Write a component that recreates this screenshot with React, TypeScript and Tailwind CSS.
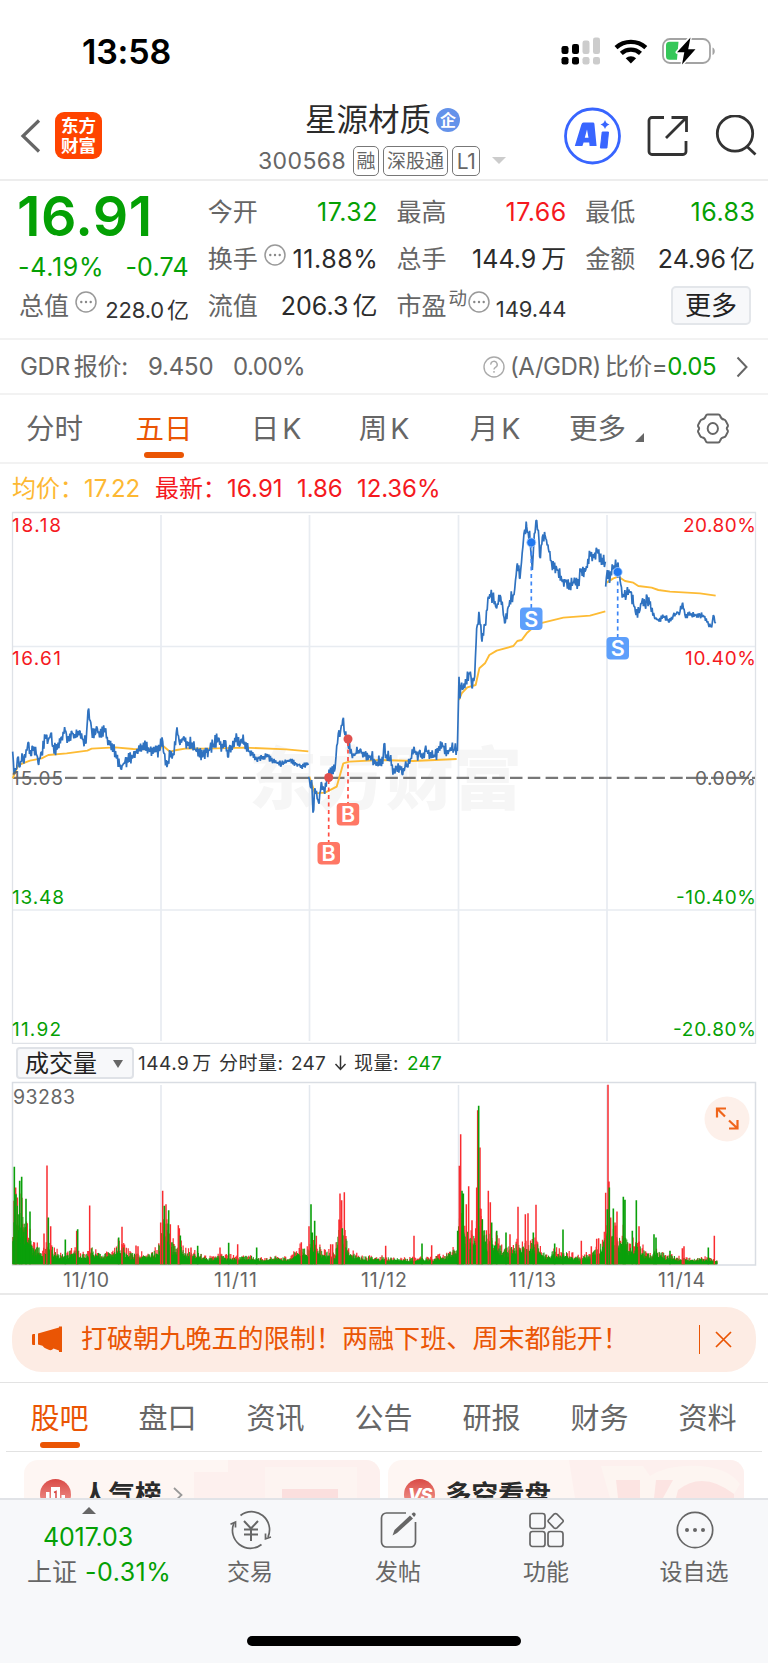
import type { ReactNode } from "react";

const FONT = "font-['Inter','Noto_Sans_CJK_SC',sans-serif]";

/* ---------- chart data ---------- */

type Pt = [number, number];

const priceA: Pt[] = [
  [38,755],[42,820],[50,805],[55,770],[60,800],[66,760],[72,790],[84,728],[92,765],[100,740],[110,765],[116,795],[125,755],[138,708],[145,720],[152,702],[158,740],[170,748],[185,712],[197,692],[203,722],[215,694],[225,710],[238,692],[250,722],[258,730],[264,632],[270,660],[275,690],[285,705],[292,685],[300,708],[315,690],[325,725],[340,745],[350,775],[362,805],[375,785],[400,770],[415,748],[436,735],[450,755],[465,755],[480,750],[486,712],[492,760],[502,795],[512,755],[522,765],[531,682],[540,735],[550,712],[560,735],[575,730],[590,755],[610,765],[630,745],[655,714],[665,745],[675,722],[683,770],[690,735],[700,740],[711,715],[718,740],[725,717],[745,752],[770,778],[800,767],[820,785],[845,792],[870,780],[900,797],[925,795],
];
const priceB: Pt[] = [
  [926,830],[931,860],[935,840],[939,938],[945,865],[955,905],[965,850],[972,870],[985,835],[995,810],[1003,815],[1008,770],[1015,700],[1022,690],[1028,660],[1035,705],[1044,735],[1055,760],[1062,765],[1080,748],[1095,765],[1115,770],[1130,790],[1140,780],[1148,792],[1152,732],[1158,765],[1170,780],[1185,820],[1190,803],[1200,800],[1206,822],[1215,800],[1230,785],[1240,750],[1255,765],[1260,750],[1266,775],[1275,748],[1290,765],[1305,770],[1315,748],[1330,738],[1340,755],[1355,745],[1372,753],[1377,530],[1380,595],[1385,548],[1390,565],[1398,542],[1411,515],[1417,565],[1424,530],[1430,385],[1438,345],[1446,425],[1455,375],[1465,290],[1478,290],[1490,325],[1500,285],[1508,320],[1514,370],[1525,320],[1535,290],[1542,285],[1552,190],[1560,235],[1572,100],[1580,80],[1590,118],[1597,210],[1603,100],[1608,62],[1615,90],[1619,170],[1627,112],[1635,105],[1645,145],[1655,190],[1670,205],[1685,240],[1700,245],[1710,255],[1725,245],[1737,258],[1740,205],[1755,215],[1770,162],[1780,165],[1792,152],[1800,180],[1816,185],
];
const priceC: Pt[] = [
  [1817,260],[1822,210],[1830,238],[1838,205],[1852,195],[1860,240],[1868,285],[1880,280],[1892,275],[1900,310],[1906,335],[1920,330],[1928,295],[1935,315],[1942,292],[1952,320],[1964,355],[1975,360],[1995,350],[2008,365],[2020,345],[2040,335],[2048,308],[2055,345],[2075,345],[2100,345],[2112,350],[2125,372],[2135,382],[2140,345],[2147,370],
];
const avg: Pt[][] = [
  [[38,835],[55,795],[90,782],[125,775],[145,765],[200,760],[262,752],[275,746],[345,742],[400,747],[480,748],[486,735],[510,755],[530,750],[560,745],[620,746],[735,743],[860,748],[925,754]],
  [[928,830],[945,880],[975,878],[1010,860],[1030,790],[1048,785],[1140,780],[1240,783],[1370,777]],
  [[1377,600],[1385,580],[1402,562],[1427,555],[1438,505],[1455,490],[1468,465],[1490,452],[1540,438],[1552,423],[1565,420],[1580,400],[1600,382],[1620,370],[1690,353],[1770,347],[1816,334]],
  [[1820,248],[1840,235],[1855,230],[1875,243],[1900,248],[1915,258],[1955,263],[1975,270],[2010,275],[2100,280],[2147,287]],
];

const envelope: Pt[] = [
  [38,150],[45,190],[60,190],[75,140],[85,120],[95,85],[105,60],[125,45],[140,60],[150,75],[160,50],[180,30],[205,40],[225,50],[240,30],[260,35],[275,52],[300,32],[340,40],[355,65],[370,55],[390,35],[420,32],[460,38],[480,65],[490,150],[500,140],[510,90],[525,55],[540,75],[550,45],[600,35],[620,20],[660,30],[690,26],[760,25],[790,16],[820,25],[870,20],[900,55],[925,45],[935,80],[950,65],[965,45],[1005,35],[1020,130],[1035,90],[1050,38],[1090,24],[1140,24],[1200,18],[1290,20],[1340,32],[1372,50],[1380,200],[1395,120],[1415,90],[1430,110],[1438,190],[1450,120],[1460,90],[1475,105],[1490,80],[1510,48],[1550,65],[1570,62],[1600,72],[1615,58],[1640,28],[1660,46],[1700,36],[1740,24],[1780,40],[1810,75],[1825,165],[1835,115],[1860,80],[1875,110],[1885,60],[1910,75],[1925,55],[1950,28],[1970,45],[2010,28],[2060,18],[2120,22],[2150,12],
];
const redSpikes: Pt[] = [
  [47,230],[132,92],[141,296],[152,114],[230,100],[269,176],[366,112],[408,56],[414,54],[482,125],[488,220],[498,180],[511,120],[535,117],[538,108],[573,50],[660,50],[713,60],[904,66],[927,114],[949,85],[992,60],[998,60],[1017,134],[1020,212],[1025,192],[1033,216],[1157,55],[1242,85],[1295,57],[1378,295],[1382,390],[1399,180],[1406,234],[1416,132],[1430,230],[1433,462],[1440,350],[1443,166],[1465,220],[1471,186],[1530,90],[1554,172],[1576,150],[1584,153],[1608,178],[1744,70],[1774,54],[1790,76],[1796,78],[1817,214],[1824,538],[1827,248],[1832,140],[1845,125],[1851,158],[1917,114],[2047,48],[2052,54],[2143,85],
];
const greenSpikes: Pt[] = [
  [43,292],[48,210],[59,250],[65,262],[78,196],[90,158],[145,140],[196,74],[233,105],[356,80],[493,175],[506,162],[541,86],[593,55],[686,64],[770,50],[933,180],[937,95],[944,130],[1027,108],[1266,62],[1373,100],[1386,220],[1390,212],[1436,475],[1447,135],[1475,125],[1490,100],[1518,95],[1600,95],[1664,62],[1689,104],[1822,165],[1828,230],[1840,167],[1870,202],[1875,193],[1897,100],[1909,192],[1962,90],[1968,80],[2010,40],[2125,50],
];

function rng(seed: number) {
  let s = seed;
  return () => {
    s = (s * 1664525 + 1013904223) % 4294967296;
    return s / 4294967296;
  };
}

function lerp(points: Pt[], x: number) {
  for (let i = 1; i < points.length; i++) {
    if (x <= points[i][0]) {
      const [x0, y0] = points[i - 1];
      const [x1, y1] = points[i];
      return y0 + ((y1 - y0) * (x - x0)) / (x1 - x0);
    }
  }
  return points[points.length - 1][1];
}

/* Series are stored in thirds of a pixel. */
function noisy(points: Pt[], seed: number) {
  const r = rng(seed);
  const out: string[] = [];
  let sign = 1;
  for (let i = 0; i < points.length; i++) {
    const [x, y] = points[i];
    out.push(`${(x / 3).toFixed(2)},${(y / 3).toFixed(2)}`);
    if (i + 1 < points.length) {
      const [nx, ny] = points[i + 1];
      const steep = Math.abs(ny - y) > 90;
      const calm = (nx > 745 && nx < 926) || nx > 1960;
      const amp = steep ? 4 : calm ? 10 : 21;
      for (let t = x + 2.2; t < nx - 1; t += 2.2) {
        sign = -sign;
        const v = y + ((ny - y) * (t - x)) / (nx - x) + sign * r() * amp;
        out.push(`${(t / 3).toFixed(2)},${(v / 3).toFixed(2)}`);
      }
    }
  }
  return out.join(" ");
}

const plain = (p: Pt[]) => p.map(([x, y]) => `${(x / 3).toFixed(2)},${(y / 3).toFixed(2)}`).join(" ");

function bars(seed: number, lo: number, hi: number, power: number) {
  const r = rng(seed);
  let d = "";
  for (let x = 39; x < 2152; x += 2.7) {
    const h = lerp(envelope, x) * (lo + (hi - lo) * Math.pow(r(), power));
    d += `M${(x / 3).toFixed(2)} 182.5v${(-h / 3).toFixed(2)}`;
  }
  return d;
}
const spikes = (p: Pt[]) => p.map(([x, h]) => `M${(x / 3).toFixed(2)} 182.5v${(-h / 3).toFixed(2)}`).join("");

/* ---------- small pieces ---------- */

function Dots({ className = "" }: { className?: string }) {
  return (
    <svg className={`size-[22px] shrink-0 ${className}`} viewBox="0 0 22 22" fill="none">
      <circle cx="11" cy="11" r="10" stroke="#999" strokeWidth="1.5" />
      <circle cx="6.3" cy="11" r="1.2" fill="#888" />
      <circle cx="11" cy="11" r="1.2" fill="#888" />
      <circle cx="15.7" cy="11" r="1.2" fill="#888" />
    </svg>
  );
}

function Label({ children }: { children: ReactNode }) {
  return <span className="text-[25px] text-[#666]">{children}</span>;
}

function StatusBar() {
  return (
    <div className="flex h-[95px] items-start pl-[82px] pt-[34px]">
      <span className="w-[90px] text-[34px] font-semibold leading-[35px] tracking-[-0.2px] text-black">13:58</span>
      <svg className="ml-[389px] mt-[3px] h-[30px] w-[156px]" viewBox="0 0 156 30">
        <g fill="#000">
          <rect x="0.5" y="9" width="7" height="8" rx="2.2" />
          <rect x="11" y="7" width="7" height="10" rx="2.2" />
          <rect x="0.5" y="20" width="7" height="7.5" rx="2.2" />
          <rect x="11" y="20" width="7" height="7.5" rx="2.2" />
        </g>
        <g fill="#ccc">
          <rect x="21.5" y="3.5" width="7" height="13.5" rx="2.2" />
          <rect x="32" y="0.5" width="7" height="16.5" rx="2.2" />
          <rect x="21.5" y="20" width="7" height="7.5" rx="2.2" />
          <rect x="32" y="20" width="7" height="7.5" rx="2.2" />
        </g>
        <g fill="none" stroke="#000" strokeWidth="4.4">
          <path d="M55 10.700 A22 22 0 0 1 84.800 10.700" />
          <path d="M60.300 16.300 A14.300 14.300 0 0 1 79.500 16.300" />
        </g>
        <path d="M64.700 21.200 A8 8 0 0 1 75.100 21.200 L69.900 26.500Z" fill="#000" />
        <rect x="102" y="2" width="47" height="24" rx="7" fill="none" stroke="#a3a3a3" strokeWidth="1.8" />
        <path d="M151.500 10.500v7.500c3-.8 3-6.700 0-7.500Z" fill="#a3a3a3" />
        <path d="M108.500 4.800h9l-1.500 18h-7.500a3.500 3.500 0 0 1-3.500-3.500v-11a3.500 3.500 0 0 1 3.500-3.500Z" fill="#35c759" />
        <path d="M129.500 0L116 15.300h7.300L121 27.500L134.500 12.200h-7.300Z" fill="#000" stroke="#fff" strokeWidth="3" strokeLinejoin="round" />
        <path d="M129.500 0.500L116 15.300h7.300L121 27.500L134.500 12.200h-7.300Z" fill="#000" />
      </svg>
    </div>
  );
}

function Tag({ children, className }: { children: ReactNode; className: string }) {
  return (
    <span className={`flex h-[30px] items-center justify-center rounded-[5px] border border-[#777] text-[19px] text-[#666] ${className}`}>
      {children}
    </span>
  );
}

function Header() {
  return (
    <header className="flex h-[86px] items-start border-b-2 border-[#ededed]">
      <svg className="ml-[20px] mt-[23px] h-[36px] w-[22px]" viewBox="0 0 22 36" fill="none">
        <path d="M19 2.500L3 18L19 33.500" stroke="#666" strokeWidth="3.2" />
      </svg>
      <div className="ml-[13px] mt-[17px] flex h-[47px] w-[47px] flex-col items-center justify-center rounded-[9px] bg-[#ff4400] text-[17.5px] font-bold leading-[19.5px] text-white">
        <span>东方</span>
        <span>财富</span>
      </div>
      <div className="ml-[156px] flex w-[250px] flex-col">
        <div className="ml-[47px] mt-[5px] flex h-[40px] items-center text-[31.5px] leading-none text-[#2b2b2b]">
          星源材质
          <span className="ml-[5px] flex size-[24px] items-center justify-center rounded-full bg-[#6492ea] text-[16px] font-bold text-white">
            企
          </span>
        </div>
        <div className="mt-[5px] flex h-[32px] items-center leading-none">
          <span className="w-[91px] text-[23px] tracking-[0.4px] text-[#666]">300568</span>
          <span className="w-[4px]" />
          <Tag className="w-[26px]">融</Tag>
          <Tag className="ml-[4px] w-[65px]">深股通</Tag>
          <Tag className="ml-[4px] w-[28px] tracking-[-0.5px] text-[21px]">L1</Tag>
          <span className="ml-[12px] mt-[-1px] border-x-[7px] border-t-[7px] border-x-transparent border-t-[#ccc]" />
        </div>
      </div>
      <svg className="ml-[56px] mt-[12px] h-[58px] w-[57px]" viewBox="0 0 57 58">
        <circle cx="28.5" cy="29" r="27" fill="none" stroke="#3865ff" strokeWidth="2.8" />
        <path fillRule="evenodd" d="M19.500 15.500h9.500q1.200 0 1.400 1.300l2.200 22.200h-7l-.4-3.500h-5.600l-1.200 3.500h-7.600l6.600-21.500q.6-2 2.100-2ZM23 22.500l-2.200 8.200h3.700Z" fill="#3865ff" />
        <path d="M38.200 25h6.300l-1.600 16h-6.500Z" fill="#3865ff" stroke="#3865ff" strokeWidth="1" strokeLinejoin="round" />
        <path d="M41 13q1 3.500 4.500 4.500q-3.500 1-4.500 4.500q-1-3.500-4.500-4.500q3.500-1 4.500-4.500Z" fill="#3865ff" />
      </svg>
      <svg className="ml-[26px] mt-[20px] h-[42px] w-[42px]" viewBox="0 0 42 42" fill="none" stroke="#333" strokeWidth="2.8">
        <path d="M17 2.500H5a3 3 0 0 0-3 3V36.500a3 3 0 0 0 3 3H36a3 3 0 0 0 3-3V26" />
        <path d="M24.500 2.500H39.500V17M39 3L19 23" />
      </svg>
      <svg className="ml-[25px] mt-[20px] h-[42px] w-[44px]" viewBox="0 0 44 42" fill="none" stroke="#333" strokeWidth="2.8">
        <circle cx="21" cy="18.5" r="17.7" />
        <path d="M33 31.500L41.500 39.500" />
      </svg>
    </header>
  );
}

function Cell({ label, children }: { label: ReactNode; children: ReactNode }) {
  return (
    <div className="flex h-[47px] items-center justify-between leading-none">
      <Label>{label}</Label>
      {children}
    </div>
  );
}

function Quote() {
  const num = "text-[25px] tracking-[0.5px] -mr-[0.5px]";
  const unit = "text-[25px] tracking-[0px]";
  return (
    <section className="flex h-[159px] gap-[19px] border-b-2 border-[#f2f2f2] pl-[19px] pr-[13px] pt-[8px] leading-none">
      <div className="flex w-[170px] flex-col">
        <span className="-ml-[2px] h-[53px] text-[55.5px] font-semibold leading-[53px] tracking-[0.5px] text-[#04a004]">16.91</span>
        <div className="flex h-[41px] items-center justify-between pt-[9px] text-[25px] text-[#04a004]">
          <span className="-ml-px tracking-[0.7px]">-4.19%</span>
          <span className="tracking-[0.2px]">-0.74</span>
        </div>
        <div className="flex h-[47px] items-center">
          <Label>总值</Label>
          <Dots className="mb-[9px] ml-[6px]" />
          <span className="ml-auto pt-[6px] text-[22px] tracking-[-0.2px] text-[#333]">
            228.0<span className="ml-[3px]">亿</span>
          </span>
        </div>
      </div>
      <div className="w-[170px]">
        <Cell label="今开"><span className={`${num} text-[#04a004]`}>17.32</span></Cell>
        <div className="flex h-[47px] items-center">
          <Label>换手</Label>
          <Dots className="mb-[9px] ml-[6px]" />
          <span className="-mr-px ml-auto text-[25px] tracking-[0.6px] text-[#2b2b2b]">11.88%</span>
        </div>
        <Cell label="流值"><span className={`${unit} text-[#2b2b2b]`}>206.3<span className="ml-[4px]">亿</span></span></Cell>
      </div>
      <div className="w-[170px]">
        <Cell label="最高"><span className={`${num} text-[#f5191e]`}>17.66</span></Cell>
        <Cell label="总手"><span className={`${unit} text-[#2b2b2b]`}>144.9<span className="ml-[5px]">万</span></span></Cell>
        <div className="flex h-[47px] items-center">
          <Label>市盈</Label>
          <span className="mb-[17px] ml-[2px] text-[18.5px] text-[#666]">动</span>
          <Dots className="mb-[9px] ml-[1px]" />
          <span className="ml-auto pt-[5px] text-[22px] tracking-[-0.1px] text-[#333]">149.44</span>
        </div>
      </div>
      <div className="flex w-[170px] flex-col">
        <Cell label="最低"><span className={`${num} text-[#04a004]`}>16.83</span></Cell>
        <Cell label="金额"><span className={`${unit} text-[#2b2b2b]`}>24.96<span className="ml-[4px]">亿</span></span></Cell>
        <div className="mr-[4px] mt-[3px] flex h-[39px] w-[80px] items-center justify-center self-end rounded-[5px] border-2 border-[#e3e6ea] bg-[#f7f8fa] text-[26px] text-[#222]">
          更多
        </div>
      </div>
    </section>
  );
}

function GdrRow() {
  return (
    <section className="flex h-[55px] items-center border-b-2 border-[#f2f2f2] pl-[20px] pr-[20px] pt-px text-[24px] leading-none text-[#666]">
      <span className="w-[128px] tracking-[-0.3px]">GDR<span className="ml-[4px]">报价:</span></span>
      <span className="w-[85px] tracking-[-0.2px]">9.450</span>
      <span className="tracking-[-0.5px]">0.00%</span>
      <svg className="ml-auto size-[22px]" viewBox="0 0 22 22" fill="none" stroke="#aaa" strokeWidth="1.4">
        <circle cx="11" cy="11" r="10" />
        <path d="M7.800 8.600a3.200 3.200 0 1 1 4.700 2.700q-1.500.8-1.500 2.200M11 15v1.800" />
      </svg>
      <span className="ml-[5px] flex w-[206px] whitespace-nowrap tracking-[-0.45px]">
        <span>(A/GDR)</span><span className="ml-[4px]">比价=</span>
        <span className="text-[#04a004]">0.05</span>
      </span>
      <svg className="ml-[20px] h-[22px] w-[12px]" viewBox="0 0 12 22" fill="none" stroke="#666" strokeWidth="2">
        <path d="M1.500 1.500L10.500 11L1.500 20.500" />
      </svg>
    </section>
  );
}

function PeriodTabs() {
  const base = "flex flex-col items-center pt-[19px]";
  return (
    <nav className="flex h-[69px] border-b-2 border-[#f2f2f2] text-[28.5px] leading-[30px] text-[#666]">
      <span className={`${base} w-[109px]`}>分时</span>
      <span className={`${base} w-[110px] text-[#ea5504]`}>
        五日
        <span className="mt-[8px] h-[6px] w-[40px] rounded-[3px] bg-[#ea5504]" />
      </span>
      <span className={`${base} w-[114px]`}><span>日<span className="ml-[3px]">K</span></span></span>
      <span className={`${base} w-[102px]`}><span>周<span className="ml-[3px]">K</span></span></span>
      <span className={`${base} w-[120px]`}><span>月<span className="ml-[3px]">K</span></span></span>
      <span className="ml-[14px] flex w-[75px] items-start pt-[19px]">
        更多
        <svg className="ml-auto mt-[19px] size-[9px]" viewBox="0 0 9 9"><path d="M9 0V9H0Z" fill="#666" /></svg>
      </span>
      <svg className="ml-[53px] mt-[18px] h-[31px] w-[32px]" viewBox="0 0 33 30" preserveAspectRatio="none" fill="none" stroke="#666" strokeWidth="2">
        <path d="M11 1.500h11q1.500 0 2 1.500q.8 2.800 3.800 3.300q1.200.2 1.900 1.400l2 3.700q.6 1.200-.3 2.200q-1.300 1.400 0 2.900q.8.900.2 2.100l-2 3.600q-.6 1.100-1.900 1.300q-2.900.4-3.800 3.200q-.4 1.800-2 1.800h-11q-1.400 0-1.900-1.500q-.9-3.100-3.900-3.500q-1.200-.2-1.800-1.300l-2-3.600q-.6-1.200.3-2.100q1.200-1.500-.1-2.900q-.8-1-.2-2.200l2-3.700q.6-1.200 1.900-1.400q2.900-.5 3.800-3.300q.5-1.500 2-1.500Z" />
        <circle cx="16.3" cy="15" r="5.300" />
      </svg>
    </nav>
  );
}

function PriceChart() {
  const label = { fontSize: 19, fontFamily: "Inter" } as const;
  return (
    <svg className="block h-[533px] w-[768px]" viewBox="0 511 768 533">
      <text x="249" y="804" fontSize="68" fontWeight="900" fill="#f6f6f6" textLength="273" fontFamily="Noto Sans CJK SC">东方财富</text>
      <g stroke="#e8ecf1" strokeWidth="1.7" fill="none">
        <path d="M161 515V1041M309.500 515V1041M458.500 515V1041M607 515V1041" />
        <path d="M13 646.500H755M13 910H755" />
      </g>
      <path d="M12.500 1043.500V512.500H755.500V1043.500Z" fill="none" stroke="#dfe2e7" strokeWidth="1.3" />
      <path d="M13 777.800H60" stroke="#777" strokeWidth="2.2" />
      <path d="M65 777.800H686" stroke="#777" strokeWidth="2.2" strokeDasharray="12.5 5.3" />
      <path d="M686 777.800H755" stroke="#777" strokeWidth="2.2" strokeDasharray="22 3 13 3" />
      <g transform="translate(0 500)" fill="none" strokeLinejoin="bevel">
        {avg.map((a, i) => <polyline key={i} points={plain(a)} stroke="#fdbb34" strokeWidth="1.9" />)}
        <polyline points={noisy(priceA, 11)} stroke="#2f72c0" strokeWidth="1.7" />
        <polyline points={noisy(priceB, 5)} stroke="#2f72c0" strokeWidth="1.7" />
        <polyline points={noisy(priceC, 29)} stroke="#2f72c0" strokeWidth="1.7" />
      </g>
      <g stroke="#ff4d42" strokeWidth="1.7" strokeDasharray="4 3.5">
        <path d="M328.700 780V842M348 742V803" />
      </g>
      <g fill="#e0504e">
        <circle cx="328.7" cy="777.5" r="4.500" /><circle cx="348" cy="739" r="4.500" />
      </g>
      <g stroke="#3d86f6" strokeWidth="1.7" strokeDasharray="4 3.5">
        <path d="M531.300 544V608M617.700 574V637" />
      </g>
      <g fill="#1f78f0" stroke="#a9cdfb" strokeWidth="0.8">
        <circle cx="531.3" cy="542.5" r="4.500" /><circle cx="617.7" cy="572" r="4.500" />
      </g>
      <g fill="#ff7765">
        <rect x="317.5" y="842" width="22.5" height="22.5" rx="4" />
        <rect x="336.7" y="803" width="22.5" height="22.5" rx="4" />
      </g>
      <g fill="#5d9ffb">
        <rect x="520" y="607.5" width="22.5" height="22.5" rx="4" />
        <rect x="606.5" y="637" width="22.5" height="22.5" rx="4" />
      </g>
      <g fill="#fff" fontSize="21.500" fontWeight="600" textAnchor="middle" fontFamily="Inter">
        <text x="328.7" y="861">B</text><text x="348" y="822">B</text>
        <text x="531.3" y="626.500">S</text><text x="617.700" y="656">S</text>
      </g>
      <g {...label} fill="#f5191e">
        <text x="12" y="532" textLength="49">18.18</text>
        <text x="12" y="664.500" textLength="49">16.61</text>
        <text x="683" y="532" textLength="73">20.80%</text>
        <text x="685" y="664.500" textLength="71">10.40%</text>
      </g>
      <g {...label} fill="#666">
        <text x="12" y="784.500" textLength="51">15.05</text>
        <text x="695" y="784.500" textLength="61">0.00%</text>
      </g>
      <g {...label} fill="#04a004">
        <text x="12" y="903.500" textLength="52">13.48</text>
        <text x="12" y="1036" textLength="49">11.92</text>
        <text x="676" y="903.500" textLength="80">-10.40%</text>
        <text x="673" y="1036" textLength="83">-20.80%</text>
      </g>
    </svg>
  );
}

function VolumeHeader() {
  return (
    <div className="flex h-[37px] items-center pl-[16px] pt-px text-[19px] leading-none text-[#333]">
      <div className="flex h-[32px] w-[118px] items-center rounded-[4px] border-2 border-[#dfe2e7] bg-[#f7f8fa] pl-[7px] pt-px text-[24px] text-[#222]">
        成交量
        <span className="ml-[16px] border-x-[5px] border-t-[8px] border-x-transparent border-t-[#666]" />
      </div>
      <span className="ml-[4px] w-[81px] tracking-[0.5px]">144.9<span className="ml-[3px]">万</span></span>
      <span className="w-[72px] tracking-[0.5px]">分时量:</span>
      <span className="w-[43px] tracking-[0.2px]">247</span>
      <svg className="h-[18px] w-[13px]" viewBox="0 0 13 18" fill="none" stroke="#333" strokeWidth="1.5"><path d="M6.500 1.500V15M1.500 10L6.500 15.500L11.500 10" /></svg>
      <span className="ml-[7px] w-[53px] tracking-[0.5px]">现量:</span>
      <span className="tracking-[0.2px] text-[#04a004]">247</span>
    </div>
  );
}

function VolumeChart() {
  return (
    <svg className="block h-[212px] w-[768px]" viewBox="0 0 768 212">
      <g stroke="#e3e8ee" strokeWidth="1.5">
        <path d="M161 4V184M309.500 4V184M458.500 4V184M607 4V184" />
      </g>
      <path d="M12.500 184V1.500H755.500V184Z" fill="none" stroke="#d9dde3" strokeWidth="1.5" />
      <g transform="translate(0 0.7)" strokeWidth="1.25" fill="none">
        <path d={bars(7, 0.4, 1.2, 1.3)} stroke="#fb3236" />
        <path d={bars(3, 0.3, 1, 0.8)} stroke="#1c9a0c" strokeWidth="1" />
        <path d={bars(77, 0.35, 0.7, 1)} stroke="#0aa00a" />
        <path d={spikes(redSpikes)} stroke="#f92c30" strokeWidth="1.5" />
        <path d={spikes(greenSpikes)} stroke="#0aa00a" strokeWidth="1.6" />
      </g>
      <text x="13" y="22.500" fontSize="19.500" fontFamily="Inter" fill="#666" textLength="62">93283</text>
      <circle cx="727" cy="38" r="22.500" fill="#fdf0ea" />
      <path d="M717 36.500V27.500H726M717.500 28L725 35.500M729 47.500H737.500V39M737 47L729 39.500" fill="none" stroke="#f0651b" strokeWidth="2.2" />
      <g fontSize="19.500" fontFamily="Inter" fill="#666">
        <text x="63" y="206" textLength="46">11/10</text>
        <text x="214" y="206" textLength="43">11/11</text>
        <text x="361" y="206" textLength="46">11/12</text>
        <text x="509" y="206" textLength="47">11/13</text>
        <text x="658" y="206" textLength="47">11/14</text>
      </g>
    </svg>
  );
}

function Banner() {
  return (
    <section className="h-[90px] border-b border-t-2 border-b-[#e3e3e3] border-t-[#e9e9e9] px-[12px] pt-[12px]">
      <div className="flex h-[65px] items-center rounded-[30px] bg-[#fdece4] leading-none text-[#ea5504]">
        <svg className="ml-[20px] h-[27px] w-[31px]" viewBox="0 0 31 27" fill="#ea5504">
          <path d="M1 8h2v11H1q-1 0-1-1.500v-8Q0 8 1 8ZM6 7.500L27 1.500V0.500H30V26H27V24.500L21.500 22.500Q19 25.500 15 23Q12 22 10.500 19.700L6 18.500Z" />
        </svg>
        <span className="ml-[18px] text-[26.1px]">打破朝九晚五的限制！两融下班、周末都能开！</span>
        <span className="ml-auto h-[29px] w-[1.5px] bg-[#ea5504]" />
        <svg className="ml-[15px] mr-[24px] size-[17px]" viewBox="0 0 17 17" stroke="#ea5504" strokeWidth="1.7"><path d="M1 1L16 16M16 1L1 16" /></svg>
      </div>
    </section>
  );
}

function InfoTabs() {
  const items = ["股吧", "盘口", "资讯", "公告", "研报", "财务", "资料"];
  return (
    <nav className="mx-[6px] flex h-[69px] w-[756px] border-b border-[#e2e2e2] text-[29px] leading-[30px] text-[#666]">
      {items.map((t, i) => (
        <span key={t} className={`-ml-px flex w-[109px] shrink-0 flex-col items-center pt-[21px] ${i === 0 ? "text-[#ea5504]" : ""}`}>
          {t}
          {i === 0 && <span className="mt-[8px] h-[6px] w-[40px] rounded-[3px] bg-[#ea5504]" />}
        </span>
      ))}
    </nav>
  );
}

function Cards() {
  return (
    <section className="flex h-[46px] gap-[8px] overflow-hidden pl-[24px] pt-[8px]">
      <div className="relative flex h-[90px] w-[356px] overflow-hidden rounded-[14px] bg-[#fef6f3]">
        <svg className="absolute left-0 top-0 h-[38px] w-[356px]" viewBox="0 0 356 38">
          <path d="M204 0H356V38H170V12H204Z" fill="#fdf0ee" />
          <path d="M241 7H333V38H241Z" fill="#fdf4f1" />
          <path d="M258 29H314V38H258Z" fill="#fbdfde" />
        </svg>
        <div className="relative flex h-[69px] items-center leading-none">
          <svg className="ml-[16px] size-[31px]" viewBox="0 0 31 31">
            <defs><linearGradient id="rank" x2="0" y2="1"><stop stopColor="#d94a46" /><stop offset="1" stopColor="#f4a49d" /></linearGradient></defs>
            <circle cx="15.5" cy="15.5" r="15.5" fill="url(#rank)" />
            <path d="M6 13H9.500V22H6ZM11 8H20V22H11ZM21.500 16H25V22H21.500Z" fill="#fff" />
            <path d="M14 13.500l2-1v8" stroke="#d94a46" strokeWidth="1.5" fill="none" />
          </svg>
          <span className="ml-[11px] text-[26.5px] font-bold text-[#2b2b2b]">人气榜</span>
          <svg className="ml-[11px] h-[16px] w-[10px]" viewBox="0 0 10 16" fill="none" stroke="#999" strokeWidth="1.8"><path d="M1 1L8.500 8L1 15" /></svg>
        </div>
      </div>
      <div className="relative flex h-[90px] w-[356px] overflow-hidden rounded-[14px] bg-[#fef6f3]">
        <svg className="absolute left-0 top-0 h-[38px] w-[356px]" viewBox="0 0 356 38">
          <path d="M181 0H356V38H187Z" fill="#fdf0ee" />
          <path d="M213 6H255L262 16Q280 4 312 6Q340 8 352 24L346 34Q325 18 300 26L290 38H222Z" fill="#fdf5f1" />
          <path d="M228 20H252V38H230ZM268 20H285L275 38H266ZM290 30Q315 10 346 34V38H288Z" fill="#fce4e2" />
        </svg>
        <div className="relative flex h-[69px] items-center leading-none">
          <span className="ml-[16px] flex size-[31px] items-center justify-center rounded-full bg-linear-to-b from-[#d94a46] to-[#f4a49d] text-[18px] font-extrabold italic tracking-[-1px] text-white">VS</span>
          <span className="ml-[10px] text-[26.5px] font-bold text-[#2b2b2b]">多空看盘</span>
        </div>
      </div>
    </section>
  );
}

function NavItem({ icon, label }: { icon: ReactNode; label: string }) {
  return (
    <div className="flex w-[148px] flex-col items-center pt-[9px]">
      <svg className="ml-px h-[42px] w-[44px]" viewBox="0 0 44 42" fill="none" stroke="#666" strokeWidth="1.7">{icon}</svg>
      <span className="mt-[9px] text-[23px] leading-[24px] text-[#666]">{label}</span>
    </div>
  );
}

function BottomNav() {
  return (
    <footer className="flex h-[166px] flex-col border-t-2 border-[#e1e3e7] bg-[#f7f8fa]">
      <div className="flex h-[136px] leading-none">
        <div className="flex w-[176px] flex-col items-center pt-[7px]">
          <span className="ml-[2px] border-x-[7px] border-b-[7px] border-x-transparent border-b-[#666]" />
          <span className="mt-[10px] text-[25px] leading-[26px] tracking-[-0.1px] text-[#04a004]">4017.03</span>
          <span className="mt-[9px] flex w-full whitespace-nowrap pl-[21px] text-[25px] leading-[26px] text-[#666]">
            <span className="ml-[6px] w-[58px]">上证</span>
            <span className="tracking-[0.5px] text-[#04a004]">-0.31%</span>
          </span>
        </div>
        <NavItem
          label="交易"
          icon={
            <>
              <path d="M11.500 6.500A18 18 0 0 1 39 28M32.500 35.500A18 18 0 0 1 5 14" />
              <path d="M36.500 24.500V29.800L42 28M1.500 15.200L6.500 13V18.500" />
              <path d="M15 12L22 19.500L29 12M15 20.500H29M15 25.500H29M22 19.500V32" strokeWidth="2" />
            </>
          }
        />
        <NavItem
          label="发帖"
          icon={
            <>
              <path d="M29 4H9.500a5 5 0 0 0-5 5V33a5 5 0 0 0 5 5H33.500a5 5 0 0 0 5-5V13" />
              <path d="M15.500 26.500L17.500 21L33 6.500L36 9.500L20 24Z" fill="#666" stroke="none" />
              <path d="M34.500 5L36 3.700Q37.500 3 38.500 4.500Q39.200 5.800 38 7L37 8Z" fill="#666" stroke="none" />
            </>
          }
        />
        <NavItem
          label="功能"
          icon={
            <>
              <rect x="5" y="4.5" width="15" height="15" rx="2.5" />
              <rect x="5" y="22.5" width="15" height="15" rx="2.5" />
              <rect x="23" y="22.5" width="15" height="15" rx="2.5" />
              <path d="M29 5.200L23.500 11Q22.700 12 23.500 13L29 18.800Q30.500 20 32 18.800L37.800 13Q38.600 12 37.800 11L32 5.200Q30.500 4 29 5.200Z" />
            </>
          }
        />
        <NavItem
          label="设自选"
          icon={
            <>
              <circle cx="22" cy="21" r="17.7" />
              <g fill="#666" stroke="none"><circle cx="14" cy="21" r="2" /><circle cx="22" cy="21" r="2" /><circle cx="30" cy="21" r="2" /></g>
            </>
          }
        />
      </div>
      <div className="ml-[247px] h-[10px] w-[274px] rounded-full bg-black" />
    </footer>
  );
}

export default function App() {
  return (
    <div className={`${FONT} h-[1663px] w-[768px] overflow-hidden bg-white`}>
      <StatusBar />
      <Header />
      <Quote />
      <GdrRow />
      <PeriodTabs />
      <div className="flex h-[47px] items-center pl-[12px] pt-[2px] text-[24px] leading-none tracking-[-0.1px] text-[#f5191e]">
        <span className="w-[72px] text-[#fdb833]">均价：</span>
        <span className="w-[71px] text-[#fdb833]">17.22</span>
        <span className="w-[72px]">最新：</span>
        <span className="w-[70px] tracking-[0.1px]">16.91</span>
        <span className="w-[60px]">1.86</span>
        <span>12.36%</span>
      </div>
      <PriceChart />
      <VolumeHeader />
      <VolumeChart />
      <Banner />
      <InfoTabs />
      <Cards />
      <BottomNav />
    </div>
  );
}
